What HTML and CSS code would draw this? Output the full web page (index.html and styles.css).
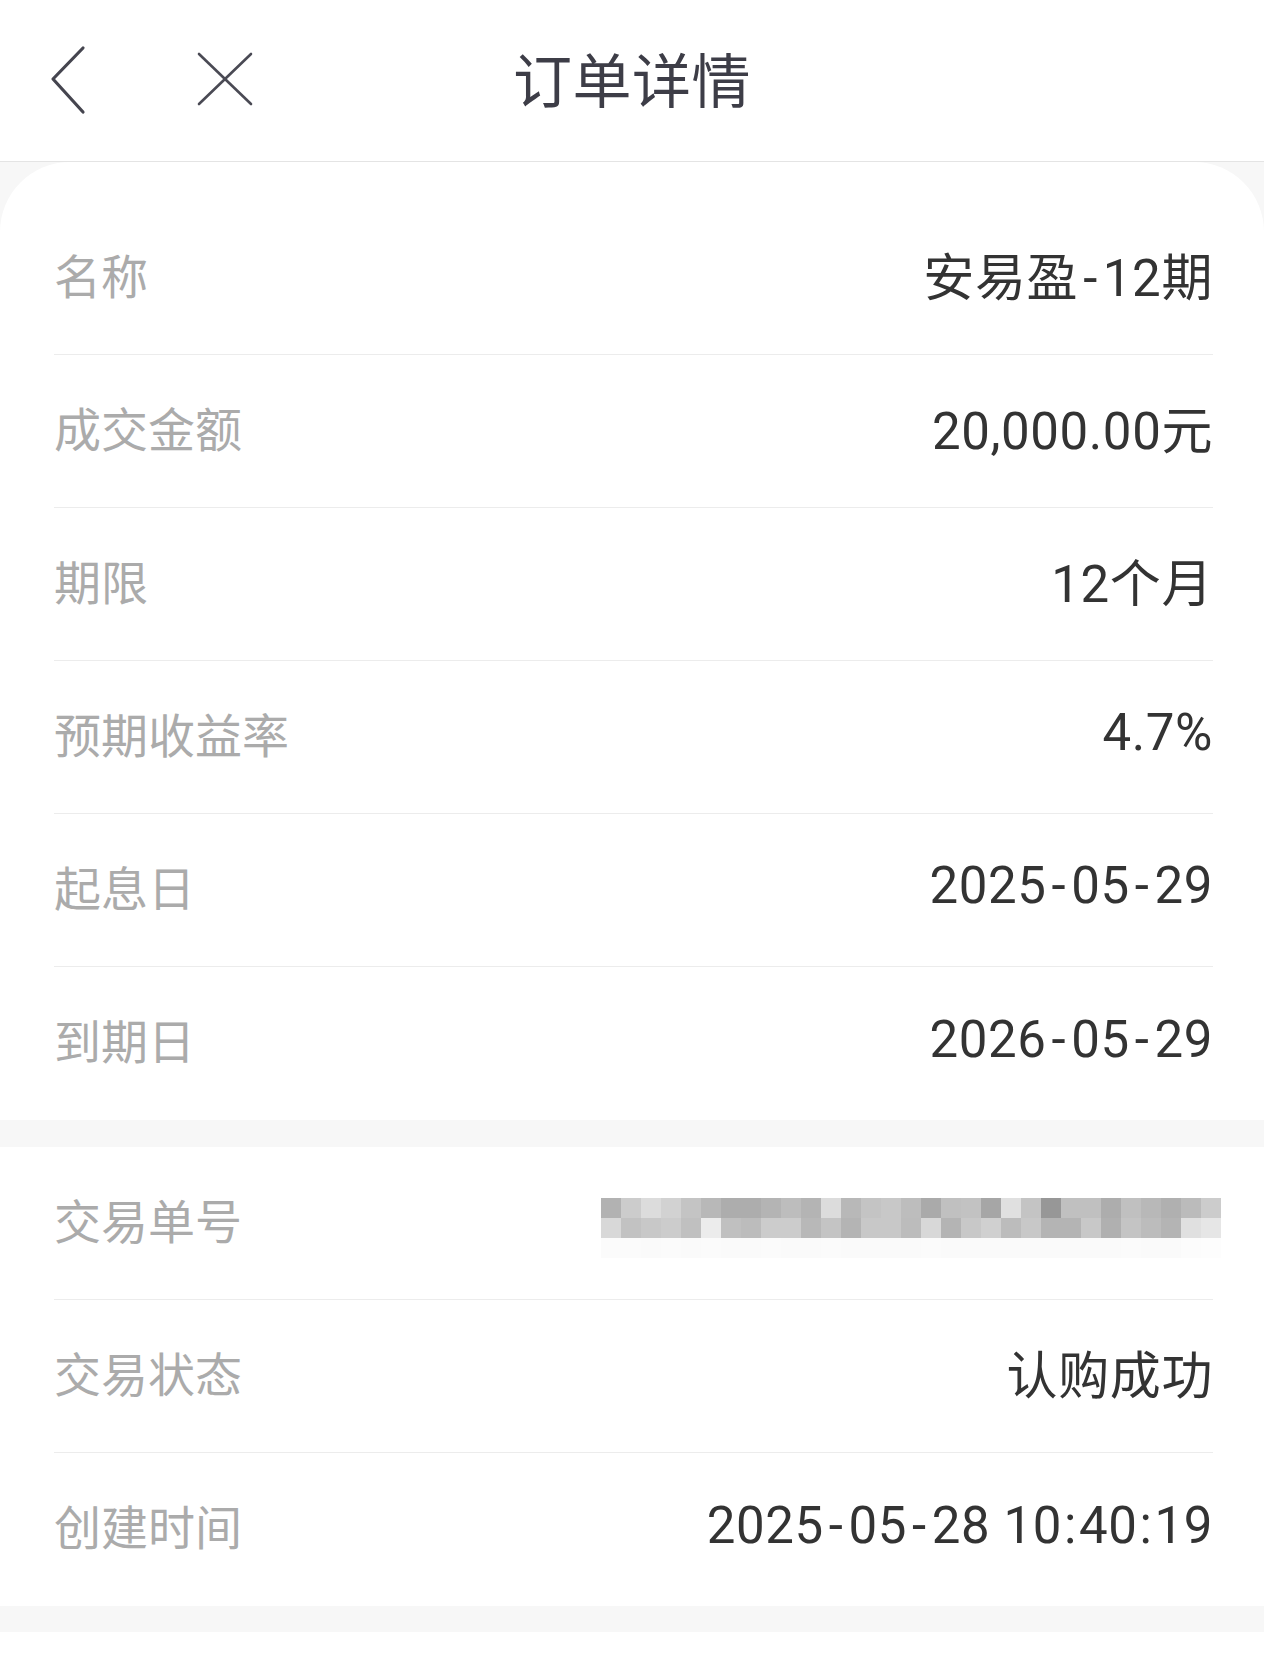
FILE: index.html
```html
<!DOCTYPE html>
<html lang="zh-CN">
<head>
  <meta charset="UTF-8">
  <meta name="viewport" content="width=device-width, initial-scale=1.0">
  <title>订单详情</title>
  <link rel="stylesheet" href="styles.css">
</head>
<body>
  <!-- Top bar -->
  <header class="top-bar">
    <div class="top-actions">
      <svg class="icon-back" width="40" height="70" viewBox="0 0 40 70">
        <polyline points="33,3 3,34 33,67" fill="none" stroke="#45454f" stroke-width="3.2" stroke-linecap="round" stroke-linejoin="round"/>
      </svg>
      <svg class="icon-close" width="56" height="56" viewBox="0 0 56 56">
        <line x1="2" y1="2" x2="54" y2="52" stroke="#4a4a54" stroke-width="2.6" stroke-linecap="round"/>
        <line x1="54" y1="2" x2="2" y2="52" stroke="#4a4a54" stroke-width="2.6" stroke-linecap="round"/>
      </svg>
    </div>
    <h1 class="page-title">订单详情</h1>
    <div></div>
  </header>

  <!-- Product info -->
  <section class="card card-first">
    <div class="row"><span class="label">名称</span><span class="value">安易盈<span class="dash">-</span>12期</span></div>
    <div class="row"><span class="label">成交金额</span><span class="value">20,000.00元</span></div>
    <div class="row"><span class="label">期限</span><span class="value">12个月</span></div>
    <div class="row"><span class="label">预期收益率</span><span class="value">4.7%</span></div>
    <div class="row"><span class="label">起息日</span><span class="value">2025<span class="dash">-</span>05<span class="dash">-</span>29</span></div>
    <div class="row"><span class="label">到期日</span><span class="value">2026<span class="dash">-</span>05<span class="dash">-</span>29</span></div>
  </section>

  <!-- Trade info -->
  <section class="card">
    <div class="row">
      <span class="label">交易单号</span>
      <div class="mosaic" id="mosaic"></div>
    </div>
    <div class="row"><span class="label">交易状态</span><span class="value">认购成功</span></div>
    <div class="row"><span class="label">创建时间</span><span class="value">2025<span class="dash">-</span>05<span class="dash">-</span>28 10<span class="colon">:</span>40<span class="colon">:</span>19</span></div>
  </section>

  <section class="card card-tail"></section>

  <script>
    // Blurred order number: grey levels of the pixelated cells
    const mosaicRows = [
      ['b2','cc','dc','d2','c4','b8','ad','ad','b4','bd','b4','dc','b8','c4','c8','bd','aa','c0','c2','a6','e0','c4','97','c0','c0','ad','c0','b8','b0','bb','cc'],
      ['d8','c2','c8','cc','c0','ec','c0','bc','cc','cc','b8','c4','b4','c8','c8','bc','d8','b4','c8','d0','bc','c8','b4','b4','c8','b0','c4','bc','b4','e0','e6'],
      ['fb','fb','fa','fb','fa','fb','fa','fa','fb','fa','fa','fb','fa','fa','fa','fa','fb','fa','fa','fa','fa','fa','fa','fa','fa','fa','fb','fa','fa','fc','fd']
    ];
    const mosaic = document.getElementById('mosaic');
    mosaicRows.forEach(function (row) {
      row.forEach(function (g) {
        const cell = document.createElement('span');
        cell.style.background = '#' + g + g + g;
        mosaic.appendChild(cell);
      });
    });
  </script>
</body>
</html>
```

FILE: styles.css
```css
/* Global Styles */
* {
  margin: 0;
  padding: 0;
  box-sizing: border-box;
}
body {
  font-family: Roboto, "Noto Sans CJK SC", sans-serif;
  background-color: #f7f7f7;
  color: #333;
  width: 1264px;
  min-height: 1667px;
}

/* Top bar */
.top-bar {
  height: 162px;
  background: #fff;
  border-bottom: 1px solid #e4e4e4;
  display: grid;
  grid-template-columns: 1fr auto 1fr;
  align-items: center;
}
.top-actions {
  display: flex;
  align-items: center;
  padding-left: 50px;
  gap: 107px;
}
.icon-back {
  margin-top: -2px;
}
.icon-close {
  margin-top: -2px;
}
.page-title {
  font-family: "Noto Sans CJK SC", sans-serif;
  font-size: 59px;
  font-weight: 400;
  color: #3d3d47;
  letter-spacing: 0.5px;
  margin-top: -6px;
}

/* Cards */
.card {
  background: #fff;
  padding: 0 51px 0 54px;
  margin-top: 27px;
}
.card-first {
  margin-top: 0;
  padding-top: 40px;
  border-radius: 70px 70px 0 0;
}
.card-tail {
  height: 40px;
  margin-top: 26px;
}
.row {
  height: 153px;
  display: flex;
  justify-content: space-between;
  align-items: center;
  border-bottom: 1px solid #ececec;
}
.row:last-child {
  border-bottom: none;
}
.label {
  font-family: "Noto Sans CJK SC", sans-serif;
  font-size: 47px;
  color: #ababab;
  margin-top: -10px;
}
.value {
  font-size: 51px;
  color: #333;
  letter-spacing: 0.6px;
  margin-top: -9px;
}
.value .dash {
  padding: 0 5px;
}
.value .colon {
  padding: 0 2px;
}

/* Blurred order number */
.mosaic {
  display: grid;
  grid-template-columns: repeat(31, 20px);
  grid-auto-rows: 20px;
  margin-right: -8px;
  margin-top: 10px;
}
```
